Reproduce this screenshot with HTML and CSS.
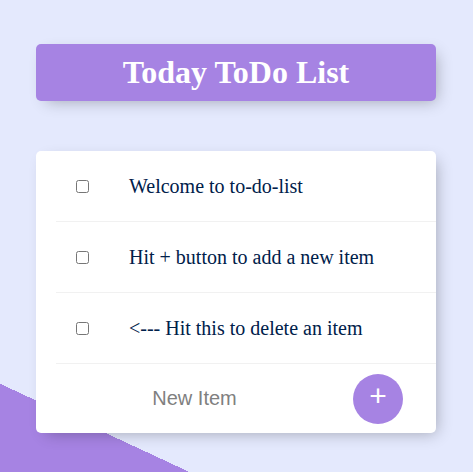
FILE: index.html
```
<!DOCTYPE html>
<html lang="en">
<head>
<meta charset="utf-8">
<title>To Do List</title>
<link rel="stylesheet" href="styles.css">
</head>
<body>
  <div class="box heading">
    <h1>Today ToDo List</h1>
  </div>
  <div class="box list">
    <div class="item">
      <input type="checkbox">
      <p>Welcome to to-do-list</p>
    </div>
    <div class="item">
      <input type="checkbox">
      <p>Hit + button to add a new item</p>
    </div>
    <div class="item">
      <input type="checkbox">
      <p>&lt;--- Hit this to delete an item</p>
    </div>
    <form class="new-item">
      <input type="text" class="new-input" placeholder="New Item" autocomplete="off">
      <button type="button" class="add-btn">+</button>
    </form>
  </div>
</body>
</html>
```
FILE: styles.css
```
html {
  background-color: #E4E9FD;
  background-image: linear-gradient(25deg, #A683E3 50%, #E4E9FD 50%);
  background-size: 100% 1000px;
  background-position: 0 -6px;
  background-repeat: no-repeat;
  min-height: 100%;
  font-family: "Liberation Serif", "Times New Roman", serif;
}

body {
  margin: 0;
  padding: 44px 1px 0 0;
}

.box {
  max-width: 400px;
  margin: 0 auto 50px;
  background: #fff;
  border-radius: 5px;
  box-shadow: 5px 5px 15px -5px rgba(0, 0, 0, 0.3);
}

.heading {
  background-color: #A683E3;
  text-align: center;
}

.heading h1 {
  margin: 0;
  padding: 10px;
  color: #fff;
  font-size: 32px;
  font-weight: bold;
}

.item {
  min-height: 70px;
  display: flex;
  align-items: center;
  margin-left: 20px;
  border-bottom: 1px solid #F1F1F1;
}

.item input[type="checkbox"] {
  margin: 20px;
  width: 13px;
  height: 13px;
  flex: none;
}

.item p {
  margin: 0;
  padding: 20px;
  font-size: 20px;
  font-weight: 200;
  color: #00204a;
}

.new-item {
  display: flex;
  align-items: center;
  height: 69px;
  margin: 0;
}

.new-input {
  text-align: center;
  height: 60px;
  border: none;
  background: transparent;
  font-family: "Liberation Sans", Arial, sans-serif;
  font-size: 20px;
  font-weight: 200;
  width: 313px;
  padding: 1px 2px;
  margin: 0;
}

.new-input:focus {
  outline: none;
  box-shadow: inset 0 -3px 0 0 #A683E3;
}

.new-input::placeholder {
  color: grey;
  opacity: 1;
}

.add-btn {
  flex: none;
  height: 50px;
  width: 50px;
  margin: 0;
  border-radius: 50%;
  border: 0;
  background-color: #A683E3;
  color: #fff;
  font-family: "Liberation Sans", Arial, sans-serif;
  font-size: 30px;
  padding: 0 0 6px;
  line-height: 1;
}
```
